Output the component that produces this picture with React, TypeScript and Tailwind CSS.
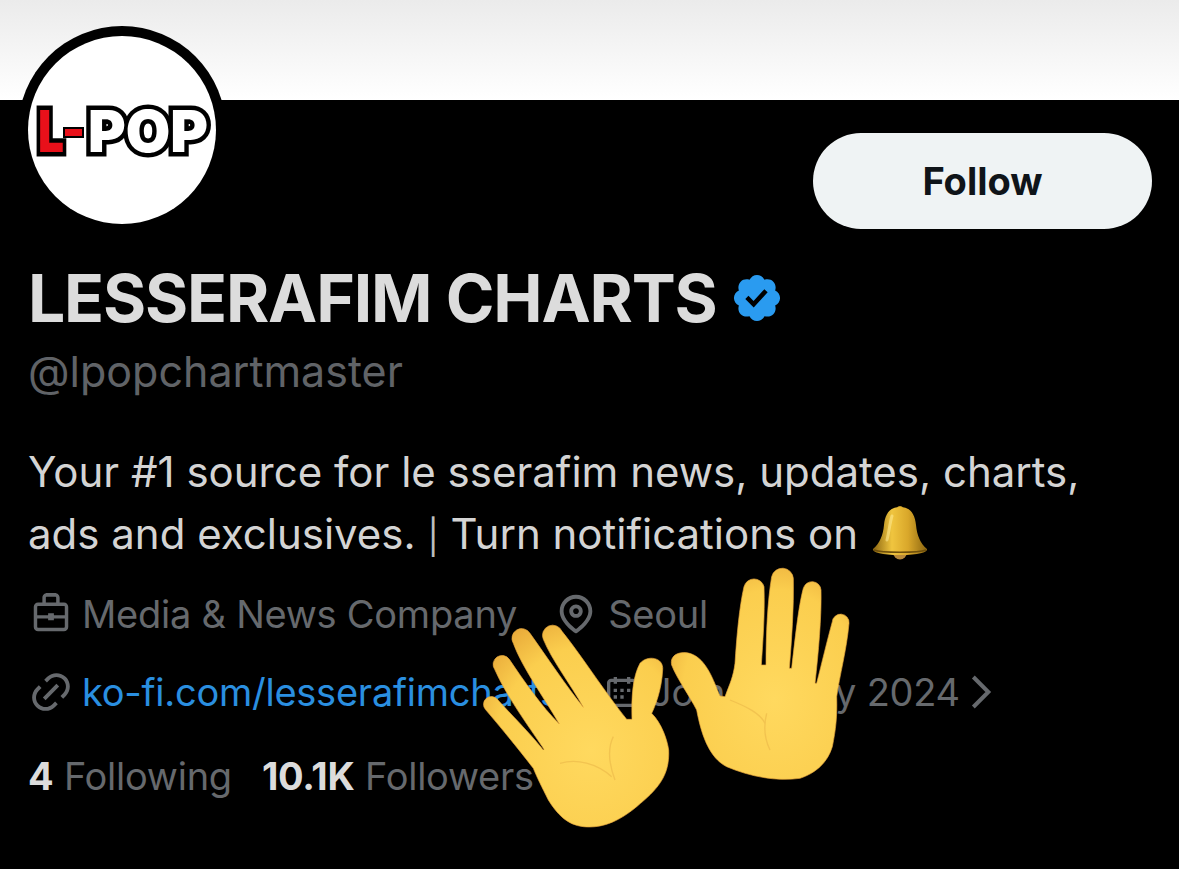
import React from "react";

const Icon = ({ d, className }: { d: string; className: string }) => (
  <svg viewBox="0 0 24 24" className={className} fill="currentColor" fillRule="evenodd">
    <path d={d} />
  </svg>
);

const briefcase = "M7.5 6V3.5C7.5 2.12 8.62 1 10 1h4c1.38 0 2.5 1.12 2.5 2.5V6h2.25C20 6 21 7.01 21 8.25v10.5c0 1.24-1 2.25-2.25 2.25H5.25C4.01 21 3 19.99 3 18.75V8.25C3 7.01 4.01 6 5.25 6H7.5zm1.8 0h5.4V3.5c0-.28-.22-.5-.5-.5h-4.4c-.28 0-.5.22-.5.5V6zM4.8 8.25V12.6h5.7v-1h3v1h5.7V8.25c0-.14-.11-.45-.25-.45H5.25c-.14 0-.45.31-.45.45zM19.2 14.3h-5.7v1h-3v-1H4.8v4.45c0 .14.31.45.45.45h13.5c.14 0 .45-.31.45-.45V14.3z";
const pin = "M12 7c-1.93 0-3.5 1.57-3.5 3.5S10.07 14 12 14s3.5-1.57 3.5-3.5S13.93 7 12 7zm0 5c-.827 0-1.5-.673-1.5-1.5S11.173 9 12 9s1.5.673 1.5 1.5S12.827 12 12 12zm0-10c-4.687 0-8.5 3.813-8.5 8.5 0 5.967 7.621 11.116 7.945 11.332l.555.37.555-.37c.324-.216 7.945-5.365 7.945-11.332C20.5 5.813 16.687 2 12 2zm0 17.77c-1.665-1.241-6.5-5.196-6.5-9.27C5.5 6.916 8.416 4 12 4s6.5 2.916 6.5 6.5c0 4.073-4.835 8.028-6.5 9.27z";
const link = "M18.36 5.64c-1.95-1.96-5.11-1.96-7.07 0L9.88 7.05 8.46 5.64l1.42-1.42c2.73-2.73 7.16-2.73 9.9 0 2.73 2.74 2.73 7.17 0 9.9l-1.42 1.42-1.41-1.42 1.41-1.41c1.96-1.96 1.96-5.12 0-7.07zm-2.12 3.53l-7.07 7.07-1.41-1.41 7.07-7.07 1.41 1.41zm-12.02.71l1.42-1.42 1.41 1.42-1.41 1.41c-1.96 1.96-1.96 5.12 0 7.07 1.95 1.96 5.11 1.96 7.07 0l1.41-1.41 1.42 1.41-1.42 1.42c-2.73 2.73-7.16 2.73-9.9 0-2.73-2.74-2.73-7.17 0-9.9z";
const calendar = "M7 4V3h2v1h6V3h2v1h1.5C19.89 4 21 5.12 21 6.5v12c0 1.38-1.11 2.5-2.5 2.5h-13C4.12 21 3 19.88 3 18.5v-12C3 5.12 4.12 4 5.5 4H7zm0 2H5.5c-.27 0-.5.22-.5.5v12c0 .28.23.5.5.5h13c.28 0 .5-.22.5-.5v-12c0-.28-.22-.5-.5-.5H17v1h-2V6H9v1H7V6zm0 6h2v-2H7v2zm0 4h2v-2H7v2zm4-4h2v-2h-2v2zm0 4h2v-2h-2v2zm4-4h2v-2h-2v2z";
const badge = "M22.25 12c0-1.43-.88-2.67-2.19-3.34.46-1.39.2-2.9-.81-3.91s-2.52-1.27-3.91-.81c-.66-1.31-1.91-2.19-3.34-2.19s-2.67.88-3.33 2.19c-1.4-.46-2.91-.2-3.92.81s-1.26 2.52-.8 3.91c-1.31.67-2.2 1.91-2.2 3.34s.89 2.67 2.2 3.34c-.46 1.39-.21 2.9.8 3.91s2.52 1.26 3.91.81c.67 1.31 1.91 2.19 3.34 2.19s2.68-.88 3.34-2.19c1.39.45 2.9.2 3.91-.81s1.27-2.52.81-3.91c1.31-.67 2.19-1.91 2.19-3.34zm-11.71 4.2L6.8 12.46l1.41-1.42 2.26 2.26 4.8-5.23 1.47 1.36-6.2 6.77z";

const Bell = () => (
  <svg viewBox="0 0 56 56" className="inline-block w-[56px] h-[56px] align-top">
    <defs>
      <linearGradient id="bellG" x1="0" x2="1" y1="0" y2="0">
        <stop offset="0" stopColor="#8a6510" />
        <stop offset="0.35" stopColor="#f0c53f" />
        <stop offset="0.65" stopColor="#d9a72a" />
        <stop offset="1" stopColor="#8c6610" />
      </linearGradient>
    </defs>
    <circle cx="28" cy="4" r="3" fill="#c79a2a" />
    <ellipse cx="28" cy="47" rx="7" ry="7.5" fill="#b9893a" />
    <path d="M28 2C17 2 13 10 12 20 11 30 8 38 1 44 0 47 8 50 28 50s28-3 27-6C48 38 45 30 44 20 43 10 39 2 28 2z" fill="url(#bellG)" />
    <path d="M2 45c8 3 44 3 52 0" fill="none" stroke="#6e4f0c" strokeWidth="1.5" />
    <path d="M20 11c-2 6-3 16-5 24" fill="none" stroke="#ffe98f" strokeWidth="3" strokeLinecap="round" opacity=".6" />
  </svg>
);

const Hands = () => (
  <svg viewBox="0 0 1200 870" className="absolute left-[470px] top-[550px] w-[400px] h-[290px]">
    <defs>
      <radialGradient id="handG" cx="0.58" cy="0.62" r="0.72">
        <stop offset="0" stopColor="#ffd95f" />
        <stop offset="0.72" stopColor="#fbce4e" />
        <stop offset="1" stopColor="#e9ab3a" />
      </radialGradient>
    </defs>
    <g stroke="#e8a83d" strokeWidth="2.5" strokeOpacity=".8">
      <path
        fill="url(#handG)"
        d="M190 655C140 590 90 530 46 478A22 22 0 0 1 82 448C120 490 180 550 220 600L222 598C170 520 110 440 74 358A24 24 0 0 1 118 328C160 390 215 470 268 522C220 440 155 350 130 280A26 26 0 0 1 180 250C230 320 290 410 340 472C300 400 245 330 220 268A28 28 0 0 1 276 244C330 310 400 420 470 508L486 508C484 440 488 380 510 340C530 315 582 320 578 360C575 420 555 470 545 490C575 520 592 570 596 600C600 680 560 720 500 770C440 820 390 835 340 830C290 825 260 790 235 750C215 710 200 680 190 655Z"
      />
      <path
        fill="url(#handG)"
        d="M680 480C660 440 620 385 605 345C598 315 630 300 665 312C710 330 730 390 750 438L765 440C780 400 790 380 795 340C800 260 808 170 822 110A31 31 0 0 1 882 110C885 200 878 280 874 345L888 345C888 250 893 150 905 80A33 33 0 0 1 970 85C972 170 965 270 958 355L965 355C975 270 985 170 1000 115A27 27 0 0 1 1053 120C1055 200 1045 310 1035 400L1040 400C1055 340 1072 270 1087 215A25 25 0 0 1 1137 220C1130 300 1108 380 1100 440C1102 500 1097 540 1087 590C1072 640 1035 670 990 685C920 695 840 680 770 650C720 625 695 560 680 480Z"
      />
    </g>
    <g fill="none" stroke="#eebc4c" strokeWidth="4" opacity=".7">
      <path d="M430 560C410 600 420 650 435 690" />
      <path d="M270 640C320 625 380 640 425 680" />
      <path d="M890 490C880 530 885 570 900 600" />
      <path d="M780 450C830 470 870 490 885 520" />
    </g>
  </svg>
);

export default function App() {
  return (
    <div className="relative w-[1179px] h-[869px] overflow-hidden bg-black font-['Inter','Liberation_Sans',sans-serif]">
      <div className="h-[100px] bg-gradient-to-b from-[#ebebeb] to-white" />

      <div className="absolute left-[18px] top-[26px] w-[208px] h-[208px] rounded-full bg-black p-[10px]">
        <div className="w-full h-full rounded-full bg-white overflow-hidden">
          <svg viewBox="0 0 188 188" className="w-full h-full">
            <g fontFamily="Inter, 'Liberation Sans', sans-serif" fontWeight="900" paintOrder="stroke" stroke="#000" strokeWidth="9" strokeLinejoin="miter">
              <text x="10" y="116" fill="#e8101a" fontSize="58" textLength="26" lengthAdjust="spacingAndGlyphs">L</text>
              <rect x="37" y="93" width="17" height="7" fill="#e8101a" stroke="#000" strokeWidth="4" />
              <text x="60" y="116" fill="#fff" fontSize="58" textLength="120" lengthAdjust="spacingAndGlyphs">POP</text>
            </g>
          </svg>
        </div>
      </div>

      <div className="px-[28px]">
        <div className="flex justify-end pt-[33px]">
          <button className="w-[339px] h-[96px] mr-[-1px] rounded-full bg-[#eff3f4] text-[#0f1419] text-[38px] font-bold border-0">
            Follow
          </button>
        </div>

        <div className="flex items-center mt-[29px] h-[80px]">
          <h1 className="text-[66px] leading-none font-bold tracking-[-1.2px] text-[#dcdcdc] whitespace-nowrap">
            LESSERAFIM CHARTS
          </h1>
          <Icon d={badge} className="w-[54px] h-[54px] ml-[13px] text-[#2a9bf0]" />
        </div>

        <div className="mt-[10px] text-[43px] leading-[46px] text-[#606367]">@lpopchartmaster</div>

        <div className="mt-[47px] text-[42px] leading-[62px] text-[#d4d4d4] whitespace-nowrap">
          <div>Your #1 source for le sserafim news, updates, charts,</div>
          <div className="flex items-start">
            <span>ads and exclusives. <span className="text-[34px] text-[#bdbdbd]">|</span> Turn notifications on</span>
            <span className="ml-[14px] mt-[2px]"><Bell /></span>
          </div>
        </div>

        <div className="flex items-center mt-[22px] h-[48px] text-[38px] tracking-[-0.25px] text-[#66696d] whitespace-nowrap">
          <Icon d={briefcase} className="w-[46px] h-[46px] mr-[8px]" />
          <span>Media &amp; News Company</span>
          <Icon d={pin} className="w-[46px] h-[46px] ml-[36px] mr-[9px]" />
          <span>Seoul</span>
        </div>

        <div className="flex items-center mt-[30px] h-[48px] text-[38px] tracking-[-0.25px] text-[#66696d] whitespace-nowrap">
          <Icon d={link} className="w-[46px] h-[46px] mr-[8px]" />
          <span className="w-[520px] overflow-hidden text-[#2a8fe0]">ko-fi.com/lesserafimcharts</span>
          <Icon d={calendar} className="w-[40px] h-[40px] mr-[8px]" />
          <span>Joined May 2024</span>
          <svg viewBox="0 0 24 24" className="w-[40px] h-[40px] ml-[0px]" fill="none" stroke="currentColor" strokeWidth="2.4">
            <path d="M8 3l9 9-9 9" />
          </svg>
        </div>

        <div className="flex mt-[35px] text-[38px] leading-[50px] tracking-[-0.25px] text-[#66696d] whitespace-nowrap">
          <span><b className="font-bold text-[#dcdcdc]">4</b> Following</span>
          <span className="ml-[30px]"><b className="font-bold text-[#dcdcdc]">10.1K</b> Followers</span>
        </div>
      </div>

      <Hands />
    </div>
  );
}
